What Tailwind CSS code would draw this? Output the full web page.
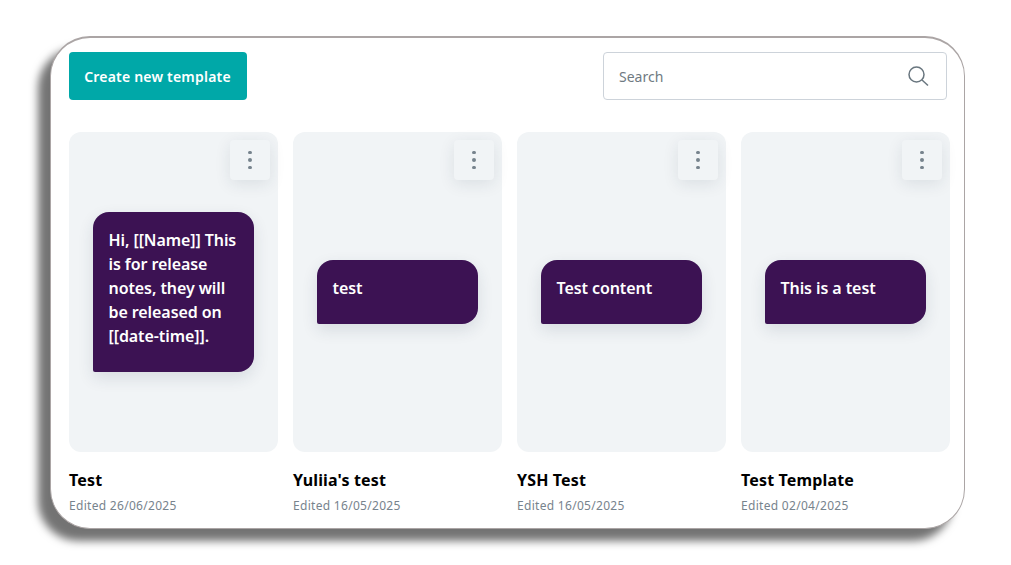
<!DOCTYPE html>
<html lang="en">
<head>
    <meta charset="UTF-8" />
    <title>Templates</title>
    <script src="https://cdn.jsdelivr.net/npm/@tailwindcss/browser@4"></script>
</head>
<body class="bg-white font-['Noto_Sans',sans-serif]">

<div class="w-[1011px] h-[565px] pl-[50px] pt-[36px] overflow-hidden">
    <div class="w-[915px] h-[493px] bg-white rounded-[40px] border border-[#aba5a5] border-t-2 shadow-[-12px_12px_8px_rgba(0,0,0,0.55)] pl-[18px] pr-[13px] pt-[14px]">

        <!-- Header -->
        <div class="flex justify-between items-center w-[878px]">
            <button class="w-[178px] h-[48px] rounded-[4px] bg-[#00a8a8] text-white text-[14px] tracking-[0.2px] font-semibold pr-[1px]">Create new template</button>
            <div class="w-[344px] h-[48px] rounded-[4px] border border-[#cdd3da] flex items-center justify-between pl-[15px] pr-[17px]">
                <span class="text-[14px] text-[#6f7a82]">Search</span>
                <svg width="22" height="22" viewBox="0 0 22 22" fill="none" stroke="#69767f" stroke-width="1.5">
                    <circle cx="9.5" cy="9.5" r="7.5" />
                    <path d="M15 15l6 5.5" />
                </svg>
            </div>
        </div>

        <!-- Templates -->
        <div class="flex gap-[15px] mt-[32px]">

            <div class="w-[209px]">
                <div class="relative h-[320px] rounded-[12px] bg-[#f1f4f6] flex items-center justify-center">
                    <div class="absolute top-[8px] right-[8px] w-[40px] h-[40px] rounded-[4px] bg-[#f1f4f6] shadow-[0_4px_16px_rgba(30,50,70,0.1)] flex flex-col items-center justify-center gap-[4px]">
                        <span class="w-[3.5px] h-[3.5px] rounded-full bg-[#77838d]"></span>
                        <span class="w-[3.5px] h-[3.5px] rounded-full bg-[#77838d]"></span>
                        <span class="w-[3.5px] h-[3.5px] rounded-full bg-[#77838d]"></span>
                    </div>
                    <div class="w-[161px] pl-[15.5px] pr-[12.5px] pt-[16px] pb-[24px] rounded-[16px] rounded-bl-[2px] bg-[#3c1253] text-white text-[16px] leading-[24px] tracking-[-0.08px] font-semibold shadow-[0_6px_16px_rgba(30,50,70,0.12)]">Hi, [[Name]] This is for release notes, they will be released on [[date-time]].</div>
                </div>
                <h2 class="mt-[17px] text-[16px] leading-[22px] tracking-[0.15px] font-bold text-black">Test</h2>
                <p class="mt-[7px] text-[12px] leading-[16px] tracking-[0.3px] text-[#77838d]">Edited 26/06/2025</p>
            </div>

            <div class="w-[209px]">
                <div class="relative h-[320px] rounded-[12px] bg-[#f1f4f6] flex items-center justify-center">
                    <div class="absolute top-[8px] right-[8px] w-[40px] h-[40px] rounded-[4px] bg-[#f1f4f6] shadow-[0_4px_16px_rgba(30,50,70,0.1)] flex flex-col items-center justify-center gap-[4px]">
                        <span class="w-[3.5px] h-[3.5px] rounded-full bg-[#77838d]"></span>
                        <span class="w-[3.5px] h-[3.5px] rounded-full bg-[#77838d]"></span>
                        <span class="w-[3.5px] h-[3.5px] rounded-full bg-[#77838d]"></span>
                    </div>
                    <div class="w-[161px] pl-[15.5px] pr-[12.5px] pt-[16px] pb-[24px] rounded-[16px] rounded-bl-[2px] bg-[#3c1253] text-white text-[16px] leading-[24px] tracking-[-0.08px] font-semibold shadow-[0_6px_16px_rgba(30,50,70,0.12)]">test</div>
                </div>
                <h2 class="mt-[17px] text-[16px] leading-[22px] tracking-[0.15px] font-bold text-black">Yuliia's test</h2>
                <p class="mt-[7px] text-[12px] leading-[16px] tracking-[0.3px] text-[#77838d]">Edited 16/05/2025</p>
            </div>

            <div class="w-[209px]">
                <div class="relative h-[320px] rounded-[12px] bg-[#f1f4f6] flex items-center justify-center">
                    <div class="absolute top-[8px] right-[8px] w-[40px] h-[40px] rounded-[4px] bg-[#f1f4f6] shadow-[0_4px_16px_rgba(30,50,70,0.1)] flex flex-col items-center justify-center gap-[4px]">
                        <span class="w-[3.5px] h-[3.5px] rounded-full bg-[#77838d]"></span>
                        <span class="w-[3.5px] h-[3.5px] rounded-full bg-[#77838d]"></span>
                        <span class="w-[3.5px] h-[3.5px] rounded-full bg-[#77838d]"></span>
                    </div>
                    <div class="w-[161px] pl-[15.5px] pr-[12.5px] pt-[16px] pb-[24px] rounded-[16px] rounded-bl-[2px] bg-[#3c1253] text-white text-[16px] leading-[24px] tracking-[-0.08px] font-semibold shadow-[0_6px_16px_rgba(30,50,70,0.12)]">Test content</div>
                </div>
                <h2 class="mt-[17px] text-[16px] leading-[22px] tracking-[0.15px] font-bold text-black">YSH Test</h2>
                <p class="mt-[7px] text-[12px] leading-[16px] tracking-[0.3px] text-[#77838d]">Edited 16/05/2025</p>
            </div>

            <div class="w-[209px]">
                <div class="relative h-[320px] rounded-[12px] bg-[#f1f4f6] flex items-center justify-center">
                    <div class="absolute top-[8px] right-[8px] w-[40px] h-[40px] rounded-[4px] bg-[#f1f4f6] shadow-[0_4px_16px_rgba(30,50,70,0.1)] flex flex-col items-center justify-center gap-[4px]">
                        <span class="w-[3.5px] h-[3.5px] rounded-full bg-[#77838d]"></span>
                        <span class="w-[3.5px] h-[3.5px] rounded-full bg-[#77838d]"></span>
                        <span class="w-[3.5px] h-[3.5px] rounded-full bg-[#77838d]"></span>
                    </div>
                    <div class="w-[161px] pl-[15.5px] pr-[12.5px] pt-[16px] pb-[24px] rounded-[16px] rounded-bl-[2px] bg-[#3c1253] text-white text-[16px] leading-[24px] tracking-[-0.08px] font-semibold shadow-[0_6px_16px_rgba(30,50,70,0.12)]">This is a test</div>
                </div>
                <h2 class="mt-[17px] text-[16px] leading-[22px] tracking-[0.15px] font-bold text-black">Test Template</h2>
                <p class="mt-[7px] text-[12px] leading-[16px] tracking-[0.3px] text-[#77838d]">Edited 02/04/2025</p>
            </div>

        </div>
    </div>
</div>

</body>
</html>
